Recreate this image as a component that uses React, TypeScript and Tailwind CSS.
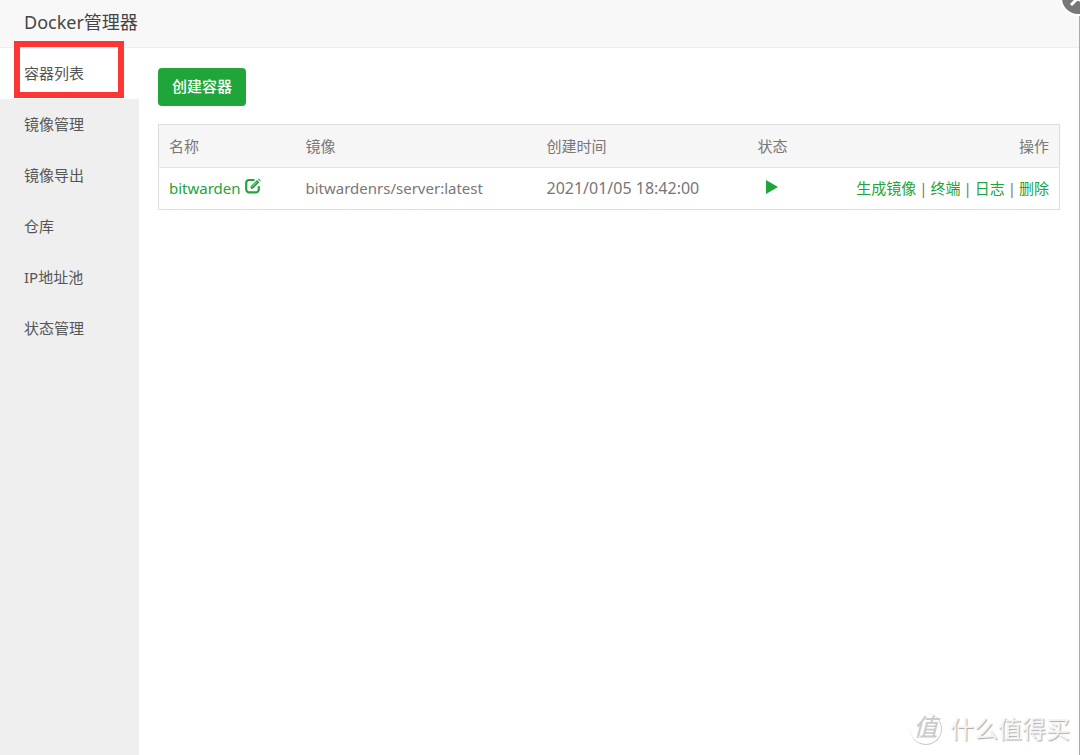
import { useState } from "react"

type Container = {
  name: string
  image: string
  created: string
}

const menuItems = ["容器列表", "镜像管理", "镜像导出", "仓库", "IP地址池", "状态管理"]

const containers: Array<Container> = [
  {
    name: "bitwarden",
    image: "bitwardenrs/server:latest",
    created: "2021/01/05 18:42:00",
  },
]

const actions = ["生成镜像", "终端", "日志", "删除"]

const EditIcon = () => (
  <svg viewBox="0 0 16 16" className="h-4 w-4" aria-hidden="true">
    <path
      d="M9.5 2H4.2A3 3 0 0 0 1.2 5v6.3a3 3 0 0 0 3 3h6.6a3 3 0 0 0 3-3V8.2"
      fill="none"
      stroke="currentColor"
      strokeWidth="2.2"
    />
    <path d="M5.6 10.8V8.3l6.5-6.4 2.3 2.3L8 10.8z" fill="currentColor" />
    <path d="M13 1.2l.8-.8 2 2-.8.8z" fill="currentColor" />
    <path d="M7 8.7l4.6-4.6" stroke="#fff" strokeWidth=".6" />
  </svg>
)

const Watermark = () => (
  <div className="pointer-events-none absolute right-[10px] bottom-[10px] flex items-center gap-2">
    <div className="flex h-8 w-8 items-center justify-center rounded-full border-r border-b border-[#ccc] pb-1 text-2xl leading-7 font-medium text-[#ccc] italic">
      值
    </div>
    <div className="text-2xl leading-8 text-[#f4f4f4] [text-shadow:1px_1px_1px_#aaa]">
      什么值得买
    </div>
  </div>
)

const App = () => {
  const [selected, setSelected] = useState(menuItems[0])

  return (
    <div className="relative flex min-h-screen flex-col overflow-hidden bg-white font-['Noto_Sans','Noto_Sans_CJK_SC',sans-serif] text-[15px] leading-5 text-[#777]">
      <header className="flex h-12 items-center border-b border-[#eee] bg-[#f8f8f8] px-6 pb-1">
        <h1 className="text-lg leading-6 text-[#444]">Docker管理器</h1>
      </header>

      <div className="flex flex-1">
        <nav className="w-[139px] shrink-0 bg-[#efefef]">
          {menuItems.map((item) => (
            <button
              key={item}
              onClick={() => setSelected(item)}
              className={`block h-[51px] w-full px-6 pb-0.5 text-left text-[#555] ${
                item === selected ? "bg-white" : ""
              }`}
            >
              {item}
            </button>
          ))}
        </nav>

        <main className="min-w-0 flex-1 py-5 pr-5 pl-[19px]">
          <button className="h-[38px] rounded bg-[#20a53a] px-[14px] pb-0.5 font-medium text-white">
            创建容器
          </button>

          <table className="mt-[18px] w-full table-fixed border border-[#ddd] text-left">
            <thead className="bg-[#f6f6f6]">
              <tr className="h-[43px] border-b border-[#e5e5e5]">
                <th className="w-[137px] px-[10px] font-normal">名称</th>
                <th className="w-[241px] px-[10px] font-normal">镜像</th>
                <th className="w-[211px] px-[10px] font-normal">创建时间</th>
                <th className="px-[10px] font-normal">状态</th>
                <th className="w-[220px] px-[10px] text-right font-normal">
                  操作
                </th>
              </tr>
            </thead>
            <tbody>
              {containers.map((container) => (
                <tr key={container.name} className="h-[42px]">
                  <td className="px-[10px] pb-0.5">
                    <a
                      href="#"
                      className="flex items-center gap-1 text-[#20a53a]"
                    >
                      {container.name}
                      <span className="pb-1">
                        <EditIcon />
                      </span>
                    </a>
                  </td>
                  <td className="px-[10px] pb-0.5">{container.image}</td>
                  <td className="px-[10px] pb-0.5 text-base leading-5">
                    {container.created}
                  </td>
                  <td className="px-[10px] pb-1">
                    <button
                      aria-label="运行中"
                      className="flex w-7 justify-center text-[#20a53a]"
                    >
                      <svg viewBox="0 0 12 14" className="h-[14px] w-3">
                        <path d="M0 0l12 7-12 7z" fill="currentColor" />
                      </svg>
                    </button>
                  </td>
                  <td className="px-[10px] pb-0.5">
                    <div className="flex justify-end whitespace-nowrap">
                      {actions.map((action, index) => (
                        <div key={action} className="flex">
                          {index > 0 && <span className="px-[3px]">|</span>}
                          <a href="#" className="text-[#20a53a]">
                            {action}
                          </a>
                        </div>
                      ))}
                    </div>
                  </td>
                </tr>
              ))}
            </tbody>
          </table>
        </main>
      </div>

      {/* highlight around the first menu item */}
      <div className="pointer-events-none absolute top-[41px] left-[14px] h-[57px] w-[110px] border-[6px] border-[#fc3535]" />

      <div className="absolute top-0 right-0 h-full w-px bg-[#aaa]" />
      <button
        aria-label="关闭"
        className="absolute -top-5 -right-4 flex h-9 w-9 items-center justify-center rounded-full border-2 border-white bg-[#777] text-white"
      >
        <svg viewBox="0 0 28 28" className="h-7 w-7">
          <path
            d="M7 7l14 14M21 7L7 21"
            fill="none"
            stroke="currentColor"
            strokeWidth="3"
          />
        </svg>
      </button>
      <Watermark />
    </div>
  )
}

export default App
